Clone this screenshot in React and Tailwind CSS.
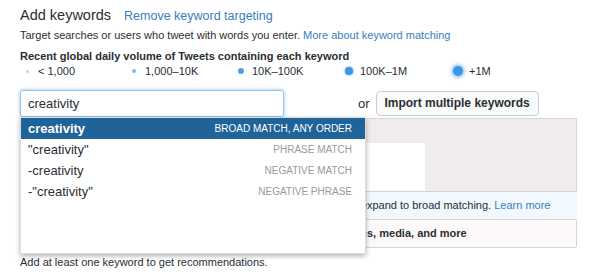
import React from 'react';

const rows = [
  { kw: 'creativity', label: 'BROAD MATCH, ANY ORDER', active: true },
  { kw: '"creativity"', label: 'PHRASE MATCH' },
  { kw: '-creativity', label: 'NEGATIVE MATCH' },
  { kw: '-"creativity"', label: 'NEGATIVE PHRASE' },
];

const legend = [
  { label: '< 1,000', dot: 'w-[3px] h-[3px] bg-[#a9d2f3]', w: 'w-[107px]' },
  { label: '1,000–10K', dot: 'w-[4px] h-[4px] bg-[#7dbcef]', w: 'w-[107px]' },
  { label: '10K–100K', dot: 'w-[6px] h-[6px] bg-[#4f9fe6]', w: 'w-[108px]' },
  { label: '100K–1M', dot: 'w-[8px] h-[8px] bg-[#3d95e4] shadow-[0_0_2px_1px_rgba(61,149,228,0.4)]', w: 'w-[109px]' },
  { label: '+1M', dot: 'w-[10px] h-[10px] bg-[#3d95e4] shadow-[0_0_3px_2px_rgba(61,149,228,0.45)]', w: '' },
];

export default function App() {
  return (
    <div className="w-[597px] h-[277px] bg-white text-[#333] font-['Liberation_Sans',Arial,sans-serif] pl-[20px] pt-[5px] overflow-hidden">
      <div className="flex items-baseline gap-[13px]">
        <h1 className="text-[14.5px] leading-[20px] text-[#292f33]">Add keywords</h1>
        <a className="text-[12.5px] text-[#3b7dc0]">Remove keyword targeting</a>
      </div>
      <p className="text-[11px] leading-[15px] mt-[2px] text-[#292f33]">
        Target searches or users who tweet with words you enter. <a className="text-[#3b7dc0]">More about keyword matching</a>
      </p>
      <p className="text-[11px] leading-[15px] mt-[6px] font-bold text-[#292f33]">Recent global daily volume of Tweets containing each keyword</p>
      <div className="flex items-center h-[15px] text-[11px] text-[#292f33]">
        {legend.map((l) => (
          <div key={l.label} className={`flex items-center ${l.w}`}>
            <span className="w-[14px] flex justify-center">
              <span className={`rounded-full ${l.dot}`} />
            </span>
            <span className="ml-[4px]">{l.label}</span>
          </div>
        ))}
      </div>

      <div className="relative mt-[11px] w-[557px]">
        <div className="flex items-center">
          <div className="w-[264px] h-[27px] border border-[#8fc3ef] rounded-[3px] shadow-[0_0_3px_1px_rgba(110,175,235,0.45)] flex items-center px-[7px] text-[13px] text-[#292f33]">
            creativity
          </div>
          <span className="ml-[74px] text-[13px] text-[#292f33]">or</span>
          <button className="ml-[6px] h-[25px] w-[163px] border border-[#c9cfd4] rounded-[4px] bg-[#f9fafa] text-[12px] font-bold text-[#292f33]">
            Import multiple keywords
          </button>
        </div>

        <div className="mt-[1px] border border-[#d7d3d2] bg-[#f0eceb] h-[74px] flex flex-col justify-end">
          <div className="w-[404px] h-[48px] bg-white" />
        </div>
        <div className="h-[27px] bg-[#f1f8fe] flex items-center text-[11px] text-[#292f33] whitespace-nowrap">
          <span className="ml-[8px] w-[339px] overflow-hidden text-right">Keyword suggestions for your campaign may e</span>
          <span>xpand to broad matching.&nbsp;<a className="text-[#3b7dc0]">Learn more</a></span>
        </div>
        <div className="h-[29px] border border-[#d7d3d2] rounded-[2px] bg-[#fcf9f8] flex items-center text-[11px] font-bold text-[#292f33] whitespace-nowrap">
          <span className="ml-[7px] w-[339px] overflow-hidden text-right">Preview recommended keywords, handle</span>
          <span>s, media, and more</span>
        </div>

        <div className="absolute left-0 top-[27px] w-[346px] bg-white shadow-[0_2px_5px_rgba(0,0,0,0.3)] border border-[#dcdcdc] pb-[51px]">
          {rows.map((r) => (
            <div
              key={r.label}
              className={`h-[21px] flex items-center justify-between pl-[7px] pr-[13px] ${r.active ? 'bg-[#1f6398] text-white' : 'text-[#292f33]'}`}
            >
              <span className={`text-[13px] ${r.active ? 'font-bold' : ''}`}>{r.kw}</span>
              <span className={`text-[10px] ${r.active ? 'text-white' : 'text-[#999]'}`}>{r.label}</span>
            </div>
          ))}
        </div>
      </div>

      <p className="text-[11px] mt-[6px] text-[#292f33]">Add at least one keyword to get recommendations.</p>
    </div>
  );
}
